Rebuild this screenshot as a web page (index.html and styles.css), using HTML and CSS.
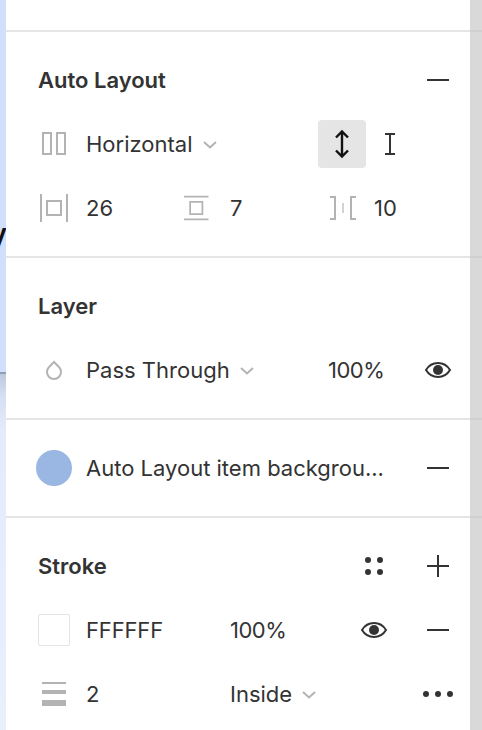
FILE: index.html
```html
<!DOCTYPE html>
<html lang="en">
<head>
<meta charset="utf-8">
<title>Design panel</title>
<link rel="stylesheet" href="styles.css">
</head>
<body>
<div class="app">
  <div class="canvas"><span class="canvas-text">y</span><span class="canvas-line"></span></div>
  <main class="panel">
    <div class="top"></div>

    <section class="section">
      <div class="row">
        <h2 class="title">Auto Layout</h2>
        <svg class="ic end" width="32" height="32" viewBox="0 0 32 32"><path class="dark" d="M5 16h22"/></svg>
      </div>
      <div class="row">
        <svg class="ic w48" width="32" height="32" viewBox="0 0 32 32"><path class="mute" d="M5 5h8v21H5zM19 5h8v21h-8z"/></svg>
        <div class="select w232">Horizontal<svg class="chev" width="14" height="8" viewBox="0 0 14 8"><path class="mute" d="M1 1l6 5.5L13 1"/></svg></div>
        <div class="toggle"><svg width="32" height="32" viewBox="0 0 32 32"><path class="arrow" d="M16 3.5v25M10 9.5l6-6 6 6M10 22.5l6 6 6-6"/></svg></div>
        <div class="w48 cell-c"><svg width="32" height="32" viewBox="0 0 32 32"><path class="dark" d="M11 6h10M16 6v20M11 26h10"/></svg></div>
      </div>
      <div class="row">
        <svg class="ic w48" width="32" height="32" viewBox="0 0 32 32"><path class="mute" d="M3 2v28M29 2v28M9 9h14v14H9z"/></svg>
        <span class="val w98">26</span>
        <svg class="ic w46" width="32" height="32" viewBox="0 0 32 32"><path class="mute" d="M0 3h28M0 29h28M7 9h14v14H7z"/></svg>
        <span class="val w100">7</span>
        <svg class="ic w44" width="32" height="32" viewBox="0 0 32 32"><path class="mute" d="M0 5h5v22H0M26 5h-5v22h5"/><path class="faint" d="M13 11v10"/></svg>
        <span class="val">10</span>
      </div>
    </section>

    <section class="section">
      <div class="row"><h2 class="title">Layer</h2></div>
      <div class="row">
        <svg class="ic w48" width="32" height="32" viewBox="0 0 32 32"><path class="mute" d="M16 8l4.95 5.05a7 7 0 1 1-9.9 0z"/></svg>
        <div class="select w242">Pass Through<svg class="chev" width="14" height="8" viewBox="0 0 14 8"><path class="mute" d="M1 1l6 5.5L13 1"/></svg></div>
        <span class="val pct w94">100%</span>
        <svg class="ic" width="32" height="32" viewBox="0 0 32 32"><path class="dark" d="M4 16c3-5 7-7 12-7s9 2 12 7c-3 5-7 7-12 7s-9-2-12-7z"/><circle class="fill" cx="16" cy="16" r="5"/></svg>
      </div>
    </section>

    <section class="section">
      <div class="row">
        <span class="swatch-wrap w48"><span class="dot"></span></span>
        <span class="val w336">Auto Layout item backgrou...</span>
        <svg class="ic" width="32" height="32" viewBox="0 0 32 32"><path class="dark" d="M5 16h22"/></svg>
      </div>
    </section>

    <section class="section">
      <div class="row">
        <h2 class="title">Stroke</h2>
        <svg class="ic end tail" width="32" height="32" viewBox="0 0 32 32"><circle class="fill" cx="10" cy="10" r="3"/><circle class="fill" cx="22" cy="10" r="3"/><circle class="fill" cx="10" cy="22" r="3"/><circle class="fill" cx="22" cy="22" r="3"/></svg>
        <svg class="ic" width="32" height="32" viewBox="0 0 32 32"><path class="dark" d="M5 16h22M16 5v22"/></svg>
      </div>
      <div class="row">
        <span class="swatch w48"><span class="square"></span></span>
        <span class="val tight w144">FFFFFF</span>
        <span class="val pct w128">100%</span>
        <svg class="ic tail" width="32" height="32" viewBox="0 0 32 32"><path class="dark" d="M4 16c3-5 7-7 12-7s9 2 12 7c-3 5-7 7-12 7s-9-2-12-7z"/><circle class="fill" cx="16" cy="16" r="5"/></svg>
        <svg class="ic" width="32" height="32" viewBox="0 0 32 32"><path class="dark" d="M5 16h22"/></svg>
      </div>
      <div class="row">
        <svg class="ic w48" width="32" height="32" viewBox="0 0 32 32"><rect class="bar" x="4" y="4" width="24" height="2"/><rect class="bar" x="4" y="12" width="24" height="4"/><rect class="bar" x="4" y="22" width="24" height="6"/></svg>
        <span class="val w144">2</span>
        <div class="select w192">Inside<svg class="chev" width="14" height="8" viewBox="0 0 14 8"><path class="mute" d="M1 1l6 5.5L13 1"/></svg></div>
        <svg class="ic" width="32" height="32" viewBox="0 0 32 32"><circle class="fill" cx="4" cy="16" r="3"/><circle class="fill" cx="16" cy="16" r="3"/><circle class="fill" cx="28" cy="16" r="3"/></svg>
      </div>
    </section>
  </main>
  <div class="scroll"></div>
</div>
</body>
</html>
```

FILE: styles.css
```css
* { box-sizing: border-box; }
html, body { margin: 0; padding: 0; }
body {
  width: 482px;
  height: 730px;
  overflow: hidden;
  background: #fff;
  font-family: Inter, "Liberation Sans", sans-serif;
  color: #333;
}
.app { display: flex; width: 482px; height: 730px; }
.canvas {
  position: relative;
  flex: 0 0 6px;
  overflow: hidden;
  background: linear-gradient(180deg, #cfdffc 0, #cfdffc 372px, #bcc8dc 374px, #d5dff2 395px, #e4ebfb 430px, #e9effd 730px);
}
.canvas-text {
  position: absolute;
  right: -1px;
  top: 218px;
  font-size: 28px;
  line-height: 32px;
  font-weight: 600;
  color: #111;
}
.canvas-line {
  position: absolute;
  left: 0;
  right: 0;
  top: 372px;
  height: 2px;
  background: #8f9fb8;
}
.panel { flex: 0 0 464px; background: #fff; }
.top { height: 32px; border-bottom: 2px solid #e5e5e5; }
.section { padding: 16px 16px 16px 32px; border-bottom: 2px solid #e5e5e5; }
.section:last-child { border-bottom: 0; }
.scroll {
  flex: 0 0 12px;
  background: linear-gradient(180deg,
    #d9d9d9 30px, #cfcfcf 30px, #cfcfcf 32px, #d9d9d9 32px,
    #d9d9d9 256px, #cfcfcf 256px, #cfcfcf 258px, #d9d9d9 258px,
    #d9d9d9 418px, #cfcfcf 418px, #cfcfcf 420px, #d9d9d9 420px,
    #d9d9d9 516px, #cfcfcf 516px, #cfcfcf 518px, #d9d9d9 518px);
}
.row { display: flex; align-items: center; height: 64px; }
.title { margin: 0; font-size: 22px; line-height: 32px; font-weight: 600; color: #333; }
.val, .select { font-size: 22px; line-height: 32px; color: #333; white-space: nowrap; }
.pct { letter-spacing: -0.5px; }
.tight { letter-spacing: -0.15px; }
.select { display: flex; align-items: center; }
.chev { margin-left: 10px; margin-top: 2px; }
.ic { display: block; flex: none; }
.end { margin-left: auto; }
.tail { margin-right: 32px; }
.w44 { width: 44px; }
.w46 { width: 46px; }
.w48 { width: 48px; }
.w94 { width: 94px; }
.w98 { width: 98px; }
.w100 { width: 100px; }
.w128 { width: 128px; }
.w144 { width: 144px; }
.w192 { width: 192px; }
.w232 { width: 232px; }
.w242 { width: 242px; }
.w336 { width: 336px; }
svg.w44, svg.w46, svg.w48 { height: 32px; }
svg.w46 { padding-right: 18px; }
svg.w44 { padding-right: 12px; }
svg.w48 { padding-right: 16px; }
.mute, .dark, .faint, .arrow { fill: none; }
.mute { stroke: #b3b3b3; stroke-width: 2; }
.faint { stroke: #c8c8c8; stroke-width: 1.6; }
.dark { stroke: #333; stroke-width: 2; }
.arrow { stroke: #111; stroke-width: 2.4; }
.fill { fill: #333; }
.bar { fill: #b3b3b3; }
.toggle {
  display: flex;
  align-items: center;
  justify-content: center;
  width: 48px;
  height: 48px;
  background: #e5e5e5;
  border-radius: 4px;
}
.cell-c { display: flex; justify-content: center; }
.swatch-wrap, .swatch { display: flex; align-items: center; flex: none; }
.dot {
  display: block;
  width: 36px;
  height: 36px;
  margin-left: -2px;
  border-radius: 50%;
  background: #9ab6e3;
}
.square {
  display: block;
  width: 32px;
  height: 32px;
  background: #fff;
  border: 1px solid #e5e5e5;
  border-radius: 2px;
}
```
